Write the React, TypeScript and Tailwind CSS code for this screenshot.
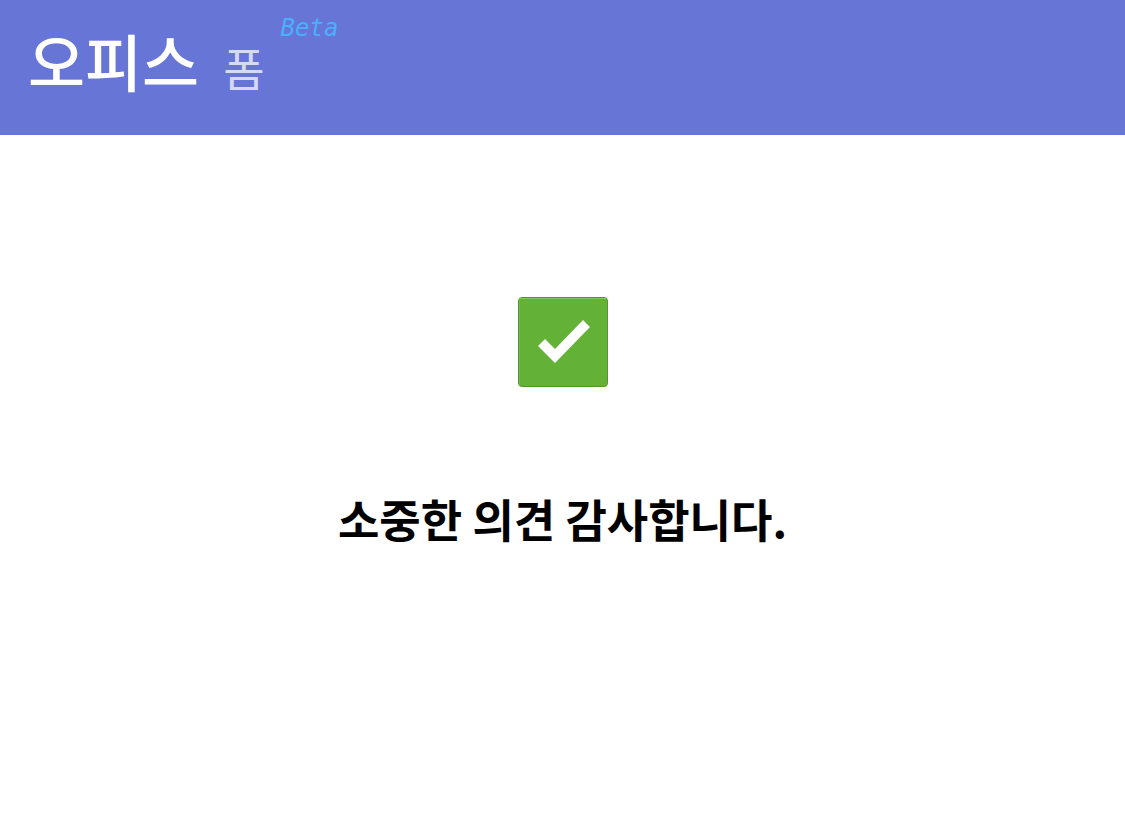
export default function App() {
  return (
    <div className="min-h-screen bg-white font-['Noto_Sans_CJK_KR',sans-serif] text-black">
      <header className="flex h-[135px] items-start bg-[#6775d7] px-7">
        <a href="#" className="flex items-baseline text-white">
          <span className="text-[62px] leading-[120px] font-medium">오피스</span>
          <span className="ml-6 text-[45px] font-normal text-[#d6daf8]">폼</span>
          <span className="ml-4 self-start pt-3 font-['DejaVu_Sans_Mono',monospace] text-[24px] leading-8 text-[#4bb0fb] italic">Beta</span>
        </a>
      </header>
      <main className="flex flex-col items-center pt-[162px]">
        <svg className="size-[90px]" viewBox="0 0 90 90" role="img" aria-label="완료">
          <rect x="0.5" y="0.5" width="89" height="89" rx="3.5" fill="#63b137" stroke="#4d9826" />
          <path d="M2 1.500h86" fill="none" stroke="#82c75c" />
          <path d="M1.500 2v86" fill="none" stroke="#72bb48" />
          <path d="M20 49l7-7 10 10L65 23l7 7L37 66z" fill="#fff" />
        </svg>
        <h1 className="mt-24 text-[45px] leading-[72px] font-bold">소중한 의견 감사합니다.</h1>
      </main>
    </div>
  );
}
